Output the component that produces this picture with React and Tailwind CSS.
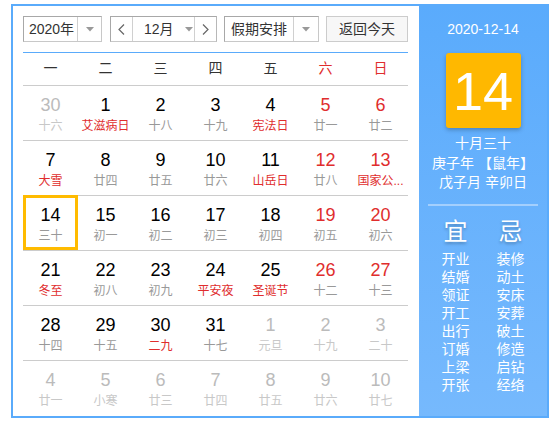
import React from 'react'

const FONT = "font-['Liberation_Sans','Noto_Sans_CJK_SC',sans-serif]"

const weeks = [
    [
        { d: 30, l: '十六', other: true },
        { d: 1, l: '艾滋病日', hol: true },
        { d: 2, l: '十八' },
        { d: 3, l: '十九' },
        { d: 4, l: '宪法日', hol: true },
        { d: 5, l: '廿一', wk: true },
        { d: 6, l: '廿二', wk: true },
    ],
    [
        { d: 7, l: '大雪', hol: true },
        { d: 8, l: '廿四' },
        { d: 9, l: '廿五' },
        { d: 10, l: '廿六' },
        { d: 11, l: '山岳日', hol: true },
        { d: 12, l: '廿八', wk: true },
        { d: 13, l: '国家公...', hol: true, wk: true },
    ],
    [
        { d: 14, l: '三十', sel: true },
        { d: 15, l: '初一' },
        { d: 16, l: '初二' },
        { d: 17, l: '初三' },
        { d: 18, l: '初四' },
        { d: 19, l: '初五', wk: true },
        { d: 20, l: '初六', wk: true },
    ],
    [
        { d: 21, l: '冬至', hol: true },
        { d: 22, l: '初八' },
        { d: 23, l: '初九' },
        { d: 24, l: '平安夜', hol: true },
        { d: 25, l: '圣诞节', hol: true },
        { d: 26, l: '十二', wk: true },
        { d: 27, l: '十三', wk: true },
    ],
    [
        { d: 28, l: '十四' },
        { d: 29, l: '十五' },
        { d: 30, l: '二九', hol: true },
        { d: 31, l: '十七' },
        { d: 1, l: '元旦', other: true },
        { d: 2, l: '十九', other: true },
        { d: 3, l: '二十', other: true },
    ],
    [
        { d: 4, l: '廿一', other: true },
        { d: 5, l: '小寒', other: true },
        { d: 6, l: '廿三', other: true },
        { d: 7, l: '廿四', other: true },
        { d: 8, l: '廿五', other: true },
        { d: 9, l: '廿六', other: true },
        { d: 10, l: '廿七', other: true },
    ],
]

const yi = ['开业', '结婚', '领证', '开工', '出行', '订婚', '上梁', '开张']
const ji = ['装修', '动土', '安床', '安葬', '破土', '修造', '启钻', '经络']

function Caret() {
    return (
        <svg width="8" height="5" viewBox="0 0 8 5">
            <path d="M0 0 L8 0 L4 4.5 Z" fill="#999" />
        </svg>
    )
}

function Chevron({ dir }) {
    return (
        <svg width="7" height="11" viewBox="0 0 7 11">
            <path
                d={dir === 'left' ? 'M6 0.5 L1 5.5 L6 10.5' : 'M1 0.5 L6 5.5 L1 10.5'}
                fill="none"
                stroke="#666"
                strokeWidth="1.2"
            />
        </svg>
    )
}

function DayCell({ cell }) {
    let numColor = 'text-black'
    if (cell.other) numColor = 'text-[#bbbbbb]'
    else if (cell.wk) numColor = 'text-[#e02d2d]'

    let lunarColor = 'text-[#999999]'
    if (cell.other) lunarColor = 'text-[#c8c8c8]'
    else if (cell.hol) lunarColor = 'text-[#e02d2d]'

    return (
        <div className="relative flex flex-col items-center pt-[8px]">
            {cell.sel && (
                <div className="absolute -top-px left-0 right-0 bottom-0 border-[3px] border-[#ffbb00]" />
            )}
            <span className={`text-[18px] leading-[22px] ${numColor}`}>{cell.d}</span>
            <span className={`text-[12px] leading-[16px] mt-[2px] whitespace-nowrap ${lunarColor}`}>
                {cell.l}
            </span>
        </div>
    )
}

export default function App() {
    return (
        <div className={`w-[557px] h-[429px] bg-white pt-[4px] pl-[11px] ${FONT}`}>
            <div className="w-[538px] h-[414px] border-2 border-[#5aabfb] flex">

                {/* Calendar */}
                <div className="w-[406px] pl-[10px] pr-[11px] pt-[10px]">

                    {/* Toolbar */}
                    <div className="flex h-[26px] text-[14px] text-[#333]">
                        <div className="w-[79px] flex border border-[#a8a8a8] border-r-[#c8c8c8] border-b-[#c8c8c8]">
                            <div className="flex-1 flex items-center justify-center pl-[2px]">2020年</div>
                            <div className="w-[24px] flex items-center justify-center border-l border-[#d0d0d0]">
                                <Caret />
                            </div>
                        </div>

                        <div className="ml-[8px] w-[107px] flex border border-[#a8a8a8] border-r-[#b8b8b8] border-b-[#c8c8c8]">
                            <div className="w-[22px] flex items-center justify-center border-r border-[#d0d0d0]">
                                <Chevron dir="left" />
                            </div>
                            <div className="flex-1 flex items-center pl-[11px]">
                                <span>12月</span>
                                <span className="ml-[11px] flex"><Caret /></span>
                            </div>
                            <div className="w-[22px] flex items-center justify-center border-l border-[#d0d0d0]">
                                <Chevron dir="right" />
                            </div>
                        </div>

                        <div className="ml-[7px] w-[95px] flex border border-[#a8a8a8] border-r-[#c8c8c8] border-b-[#c8c8c8]">
                            <div className="flex-1 flex items-center justify-center">假期安排</div>
                            <div className="w-[25px] flex items-center justify-center border-l border-[#d0d0d0]">
                                <Caret />
                            </div>
                        </div>

                        <button className="ml-[7px] flex-1 flex items-center justify-center border border-[#cccccc] bg-[#f7f7f7]">
                            返回今天
                        </button>
                    </div>

                    <div className="mt-[10px] h-px bg-[#5aabfb]" />

                    {/* Weekdays */}
                    <div className="grid grid-cols-7 h-[33px] border-b border-[#cccccc] text-[14px] text-[#333]">
                        {['一', '二', '三', '四', '五', '六', '日'].map((w, i) => (
                            <div
                                key={w}
                                className={`flex items-center justify-center pb-[1px] ${i >= 5 ? 'text-[#e02d2d]' : ''}`}
                            >
                                {w}
                            </div>
                        ))}
                    </div>

                    {/* Days */}
                    {weeks.map((row, ri) => (
                        <div
                            key={ri}
                            className={`grid grid-cols-7 h-[55px] ${ri < weeks.length - 1 ? 'border-b border-[#cccccc]' : ''}`}
                        >
                            {row.map((cell, ci) => (
                                <DayCell key={ci} cell={cell} />
                            ))}
                        </div>
                    ))}
                </div>

                {/* Side panel */}
                <div className="flex-1 bg-gradient-to-b from-[#5aabfc] to-[#76b9fd] flex flex-col items-center text-white">
                    <div className="pt-[13px] text-[14px] leading-[20px]">2020-12-14</div>

                    <div className="mt-[14px] w-[75px] h-[75px] rounded-[3px] bg-[#ffb800] shadow-[0_2px_4px_rgba(0,0,0,0.25)] flex items-center justify-center">
                        <span className="text-[54px] leading-none">14</span>
                    </div>

                    <div className="mt-[6px] text-[14px] leading-[19.5px] text-center">
                        <div>十月三十</div>
                        <div>庚子年 【鼠年】</div>
                        <div>戊子月 辛卯日</div>
                    </div>

                    <div className="mt-[11px] w-[110px] h-[2px] bg-[#a3cffd]" />

                    <div className="mt-[11px] flex">
                        <div className="w-[55px] flex flex-col items-center">
                            <div className="text-[24px] leading-[30px] [text-shadow:0_2px_3px_rgba(0,0,0,0.25)]">宜</div>
                            <div className="mt-[3px] flex flex-col items-center text-[14px] leading-[18px]">
                                {yi.map((t) => <span key={t}>{t}</span>)}
                            </div>
                        </div>
                        <div className="w-[55px] flex flex-col items-center">
                            <div className="text-[24px] leading-[30px] [text-shadow:0_2px_3px_rgba(0,0,0,0.25)]">忌</div>
                            <div className="mt-[3px] flex flex-col items-center text-[14px] leading-[18px]">
                                {ji.map((t) => <span key={t}>{t}</span>)}
                            </div>
                        </div>
                    </div>
                </div>
            </div>
        </div>
    )
}
